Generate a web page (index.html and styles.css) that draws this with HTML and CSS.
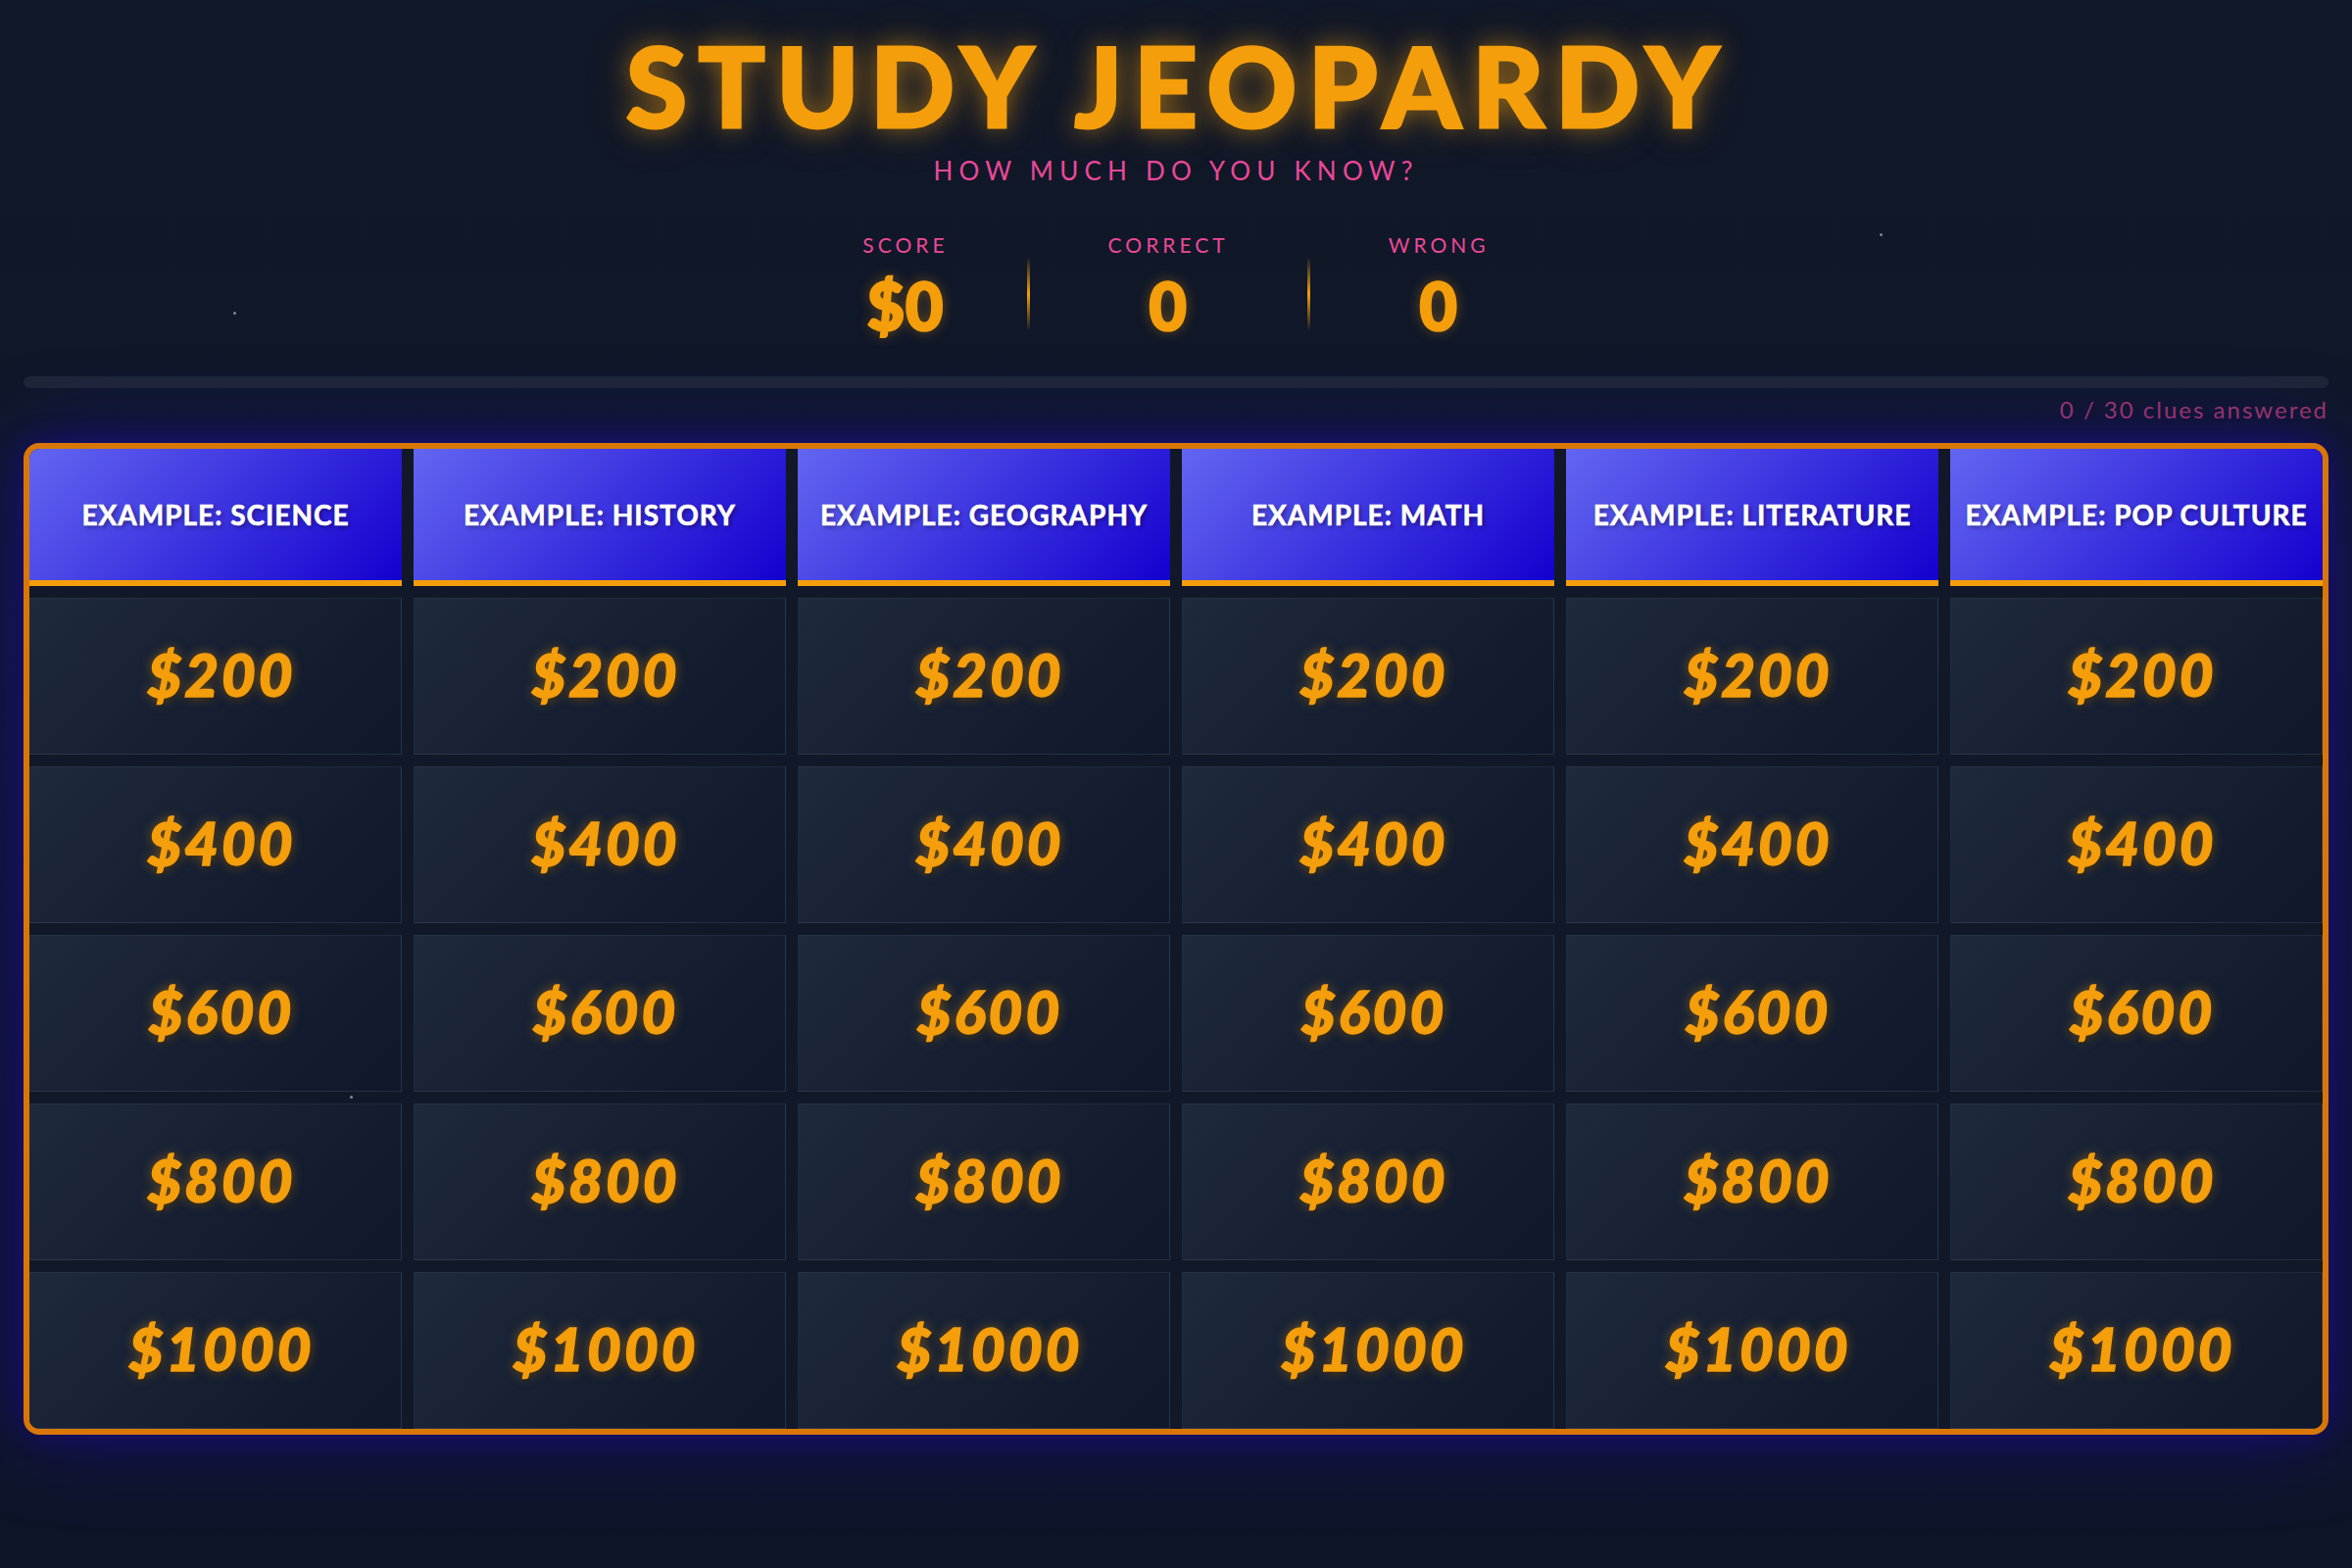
FILE: index.html
```html
<!DOCTYPE html>
<html lang="en">
<head>
<meta charset="utf-8">
<title>Study Jeopardy</title>
<link rel="stylesheet" href="styles.css">
</head>
<body>
<span class="star star-a"></span>
<span class="star star-b"></span>
<span class="star star-c"></span>
<header class="masthead">
  <h1 class="title">STUDY JEOPARDY</h1>
  <p class="subtitle">HOW MUCH DO YOU KNOW?</p>
</header>
<section class="stats">
  <div class="stat">
    <div class="stat-label">SCORE</div>
    <div class="stat-value">$0</div>
  </div>
  <div class="divider"></div>
  <div class="stat">
    <div class="stat-label">CORRECT</div>
    <div class="stat-value">0</div>
  </div>
  <div class="divider"></div>
  <div class="stat">
    <div class="stat-label">WRONG</div>
    <div class="stat-value">0</div>
  </div>
</section>
<div class="progress"><div class="progress-fill"></div></div>
<div class="progress-text">0 / 30 clues answered</div>
<main class="board">
  <div class="cat">EXAMPLE: SCIENCE</div>
  <div class="cat">EXAMPLE: HISTORY</div>
  <div class="cat">EXAMPLE: GEOGRAPHY</div>
  <div class="cat">EXAMPLE: MATH</div>
  <div class="cat">EXAMPLE: LITERATURE</div>
  <div class="cat">EXAMPLE: POP CULTURE</div>

  <div class="clue">$200</div><div class="clue">$200</div><div class="clue">$200</div><div class="clue">$200</div><div class="clue">$200</div><div class="clue">$200</div>
  <div class="clue">$400</div><div class="clue">$400</div><div class="clue">$400</div><div class="clue">$400</div><div class="clue">$400</div><div class="clue">$400</div>
  <div class="clue">$600</div><div class="clue">$600</div><div class="clue">$600</div><div class="clue">$600</div><div class="clue">$600</div><div class="clue">$600</div>
  <div class="clue">$800</div><div class="clue">$800</div><div class="clue">$800</div><div class="clue">$800</div><div class="clue">$800</div><div class="clue">$800</div>
  <div class="clue">$1000</div><div class="clue">$1000</div><div class="clue">$1000</div><div class="clue">$1000</div><div class="clue">$1000</div><div class="clue">$1000</div>
</main>
</body>
</html>
```
FILE: styles.css
```css
* { box-sizing: border-box; }

html, body {
  margin: 0;
  background: #0f172a;
}

body {
  position: relative;
  min-height: 1600px;
  padding: 26px 24px 0;
  font-family: "Lato", "Liberation Sans", sans-serif;
  color: #fff;
  background: linear-gradient(180deg, #111827 0%, #0f172a 40%, #0e1428 100%);
}

.star {
  position: absolute;
  width: 3px;
  height: 3px;
  border-radius: 50%;
  background: rgba(203, 213, 225, 0.6);
}
.star-a { left: 238px; top: 318px; }
.star-b { left: 1918px; top: 238px; }
.star-c { left: 357px; top: 1118px; }

.masthead {
  text-align: center;
}

.title {
  margin: 0;
  padding-left: 4px;
  font-size: 113px;
  line-height: 120px;
  font-weight: 900;
  letter-spacing: 11.5px;
  color: #f59e0b;
  -webkit-text-stroke: 3px #f59e0b;
  text-shadow: 0 0 24px rgba(245, 158, 11, 0.55), 0 0 48px rgba(245, 158, 11, 0.25);
}

.subtitle {
  margin: 13px 0 0;
  font-size: 26px;
  line-height: 30px;
  font-weight: 400;
  letter-spacing: 6.2px;
  color: #ec4899;
}

.stats {
  margin-top: 49px;
  display: flex;
  justify-content: center;
  gap: 80px;
}

.stat {
  display: flex;
  flex-direction: column;
  align-items: center;
}

.stat-label {
  font-size: 21px;
  line-height: 24px;
  letter-spacing: 4px;
  color: #ec4899;
}

.stat-value {
  margin-top: 15px;
  font-size: 66px;
  line-height: 70px;
  font-weight: 900;
  letter-spacing: 1px;
  color: #f59e0b;
  -webkit-text-stroke: 2.5px #f59e0b;
  text-shadow: 0 0 14px rgba(245, 158, 11, 0.45);
}

.divider {
  align-self: flex-start;
  margin-top: 24px;
  width: 3px;
  height: 76px;
  background: linear-gradient(180deg, rgba(245, 158, 11, 0), #f59e0b 50%, rgba(245, 158, 11, 0));
}

.progress {
  margin-top: 37px;
  height: 12px;
  border-radius: 6px;
  background: #1f2637;
  overflow: hidden;
}

.progress-fill {
  width: 0;
  height: 100%;
  background: #f59e0b;
}

.progress-text {
  margin-top: 8px;
  text-align: right;
  font-size: 24px;
  line-height: 28px;
  letter-spacing: 2px;
  color: rgba(236, 72, 153, 0.62);
}

.board {
  margin-top: 20px;
  display: grid;
  grid-template-columns: repeat(6, 1fr);
  grid-template-rows: 140px repeat(5, 160px);
  gap: 12px;
  border: 6px solid #d97706;
  border-radius: 16px;
  overflow: hidden;
  background: #111827;
  box-shadow: 0 0 90px rgba(40, 0, 230, 0.35), 0 0 30px rgba(40, 0, 230, 0.3);
}

.cat {
  display: flex;
  align-items: center;
  justify-content: center;
  text-align: center;
  background: linear-gradient(135deg, #6366f1 0%, #1500cf 100%);
  border-bottom: 6px solid #f59e0b;
  font-size: 28px;
  font-weight: 700;
  letter-spacing: 1px;
  color: #fff;
  -webkit-text-stroke: 0.6px #fff;
  text-shadow: 2px 2px 4px rgba(0, 0, 0, 0.45);
}

.clue {
  display: flex;
  align-items: center;
  justify-content: center;
  padding: 0 0 4px 12px;
  background: linear-gradient(135deg, #1e293b 0%, #0f172a 100%);
  border: 1px solid rgba(148, 163, 184, 0.13);
  font-size: 60px;
  font-weight: 900;
  font-style: italic;
  letter-spacing: 3px;
  color: #f59e0b;
  -webkit-text-stroke: 1.5px #f59e0b;
  text-shadow: 0 0 12px rgba(245, 158, 11, 0.5), 2px 3px 4px rgba(0, 0, 0, 0.4);
}
```
